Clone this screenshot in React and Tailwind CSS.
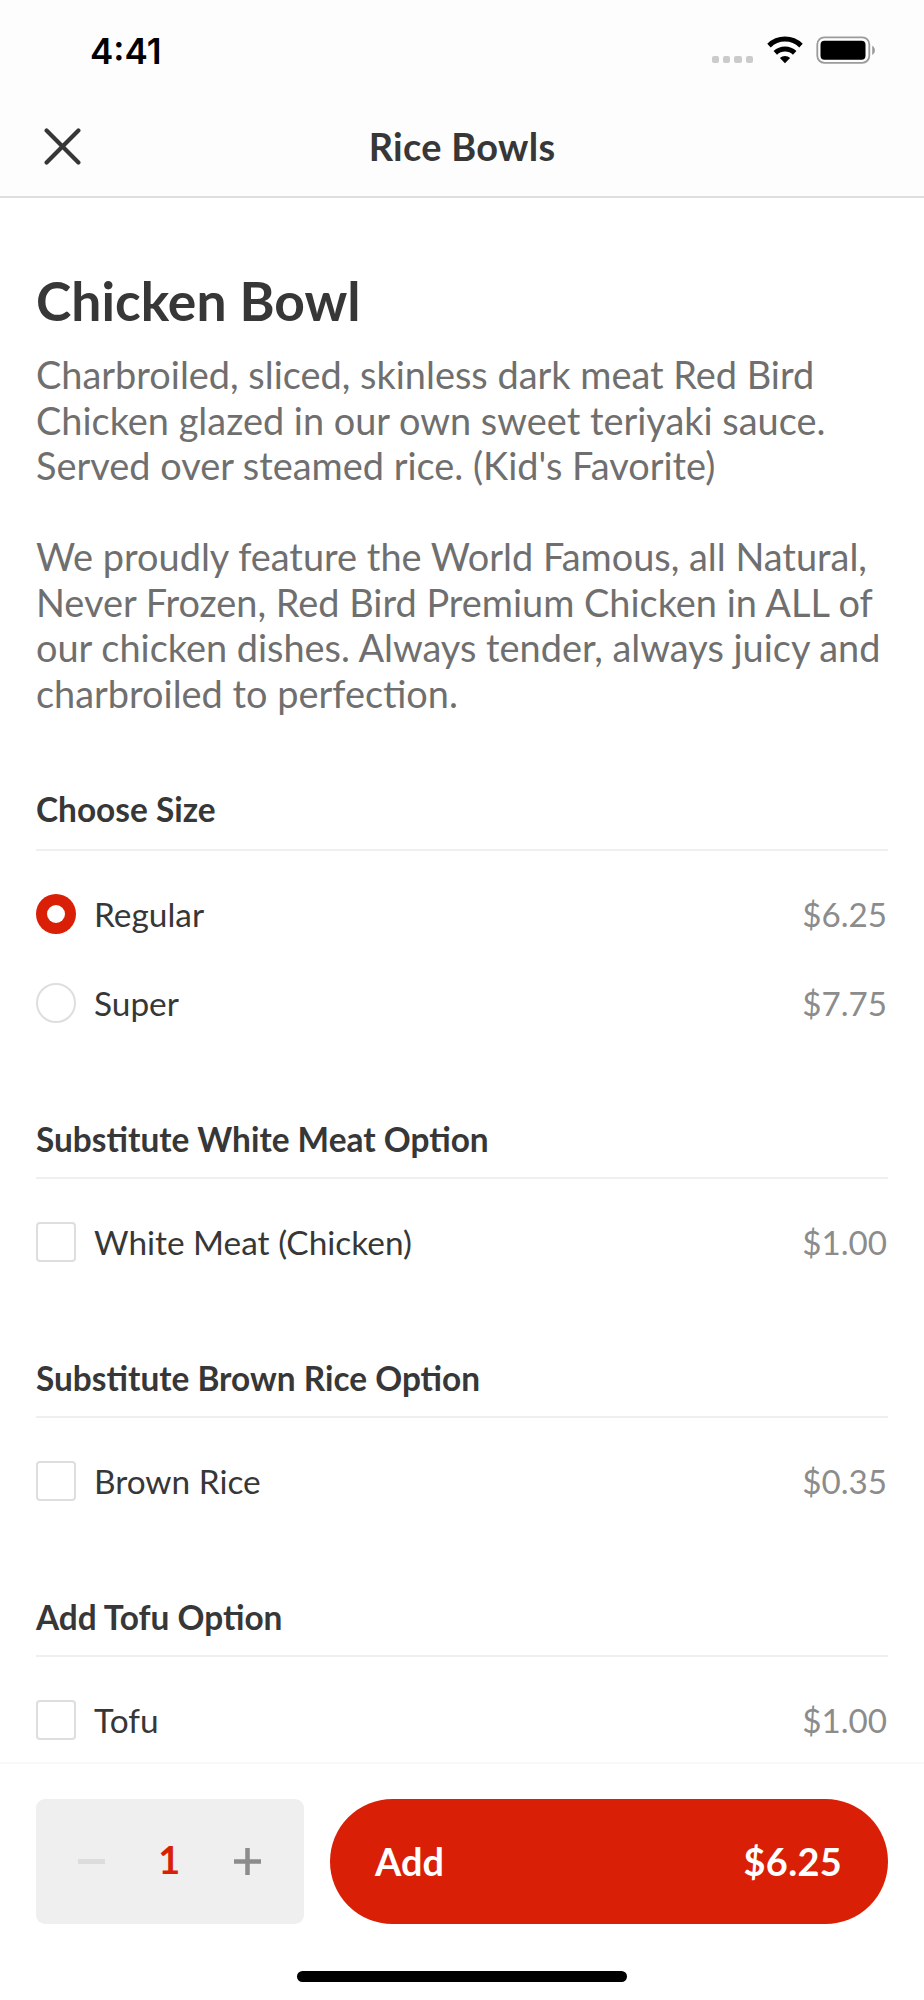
import React, { useState } from "react";

const groups = [
  {
    title: "Choose Size",
    type: "radio",
    headClass: "h-[62px]",
    bodyClass: "h-[268px]",
    items: [
      { name: "Regular", price: "$6.25" },
      { name: "Super", price: "$7.75" },
    ],
  },
  {
    title: "Substitute White Meat Option",
    type: "checkbox",
    headClass: "h-[60px]",
    bodyClass: "h-[179px]",
    items: [{ name: "White Meat (Chicken)", price: "$1.00" }],
  },
  {
    title: "Substitute Brown Rice Option",
    type: "checkbox",
    headClass: "h-[60px]",
    bodyClass: "h-[179px]",
    items: [{ name: "Brown Rice", price: "$0.35" }],
  },
  {
    title: "Add Tofu Option",
    type: "checkbox",
    headClass: "h-[60px]",
    bodyClass: "h-[105px]",
    items: [{ name: "Tofu", price: "$1.00" }],
  },
];

const StatusBar = () => (
  <div className="flex h-[98px] items-start justify-between pl-[90px] pr-[47px]">
    <span className="mt-[30px] font-['Inter'] text-[35px] font-semibold leading-[42px] text-black">
      4:41
    </span>
    <div className="mt-[36px] flex items-start">
      <div className="mt-[20px] flex gap-[4px]">
        {[0, 1, 2, 3].map((dot) => (
          <span key={dot} className="h-[7px] w-[7.3px] rounded-[2px] bg-[#cbcbcb]" />
        ))}
      </div>
      <svg className="ml-[14px]" width="36" height="28" viewBox="0 0 36 28" fill="none">
        <path d="M2 9.6 A23 23 0 0 1 34 9.6" stroke="#000" strokeWidth="5" />
        <path d="M8.3 16.9 A14 14 0 0 1 27.7 16.9" stroke="#000" strokeWidth="5" />
        <path d="M18 27.2 L12.9 22 A7.4 7.4 0 0 1 23.1 22 Z" fill="#000" />
      </svg>
      <svg className="ml-[13px]" width="61" height="28" viewBox="0 0 61 28" fill="none">
        <rect x="1.3" y="1.3" width="52" height="25.5" rx="7" stroke="#9b9b9b" strokeWidth="1.8" />
        <rect x="4.5" y="4.7" width="45" height="19" rx="4" fill="#000" />
        <path d="M56.2 9.8 C59.8 11.5 59.8 17.2 56.2 18.9 Z" fill="#9b9b9b" />
      </svg>
    </div>
  </div>
);

const OptionControl = ({ type, checked }) => {
  if (type === "radio") {
    return checked ? (
      <span className="flex h-10 w-10 items-center justify-center rounded-full bg-[#d91f06]">
        <span className="h-[18px] w-[18px] rounded-full bg-white" />
      </span>
    ) : (
      <span className="h-10 w-10 rounded-full border-2 border-[#dedede]" />
    );
  }
  return (
    <span
      className={`h-10 w-10 rounded-[4px] border-2 border-[#dedede] ${checked ? "bg-[#d91f06]" : "bg-white"}`}
    />
  );
};

const App = () => {
  const [selected, setSelected] = useState({ Regular: true });
  const [quantity, setQuantity] = useState(1);

  const handleSelect = (group, name) => {
    if (group.type === "radio") {
      setSelected((prev) => ({ ...prev, Regular: false, Super: false, [name]: true }));
    } else {
      setSelected((prev) => ({ ...prev, [name]: !prev[name] }));
    }
  };

  return (
    <div className="flex h-[2000px] w-[924px] flex-col overflow-hidden bg-white font-['Lato',sans-serif] text-[#373737]">
      <header className="h-[198px] shrink-0 border-b-2 border-[#dedede] bg-[#fdfdfd]">
        <StatusBar />
        <div className="grid h-[97px] grid-cols-[1fr_auto_1fr] items-center px-[44px]">
          <button type="button" aria-label="Close" className="w-[37px] cursor-pointer">
            <svg width="37" height="37" viewBox="0 0 37 37" fill="none">
              <path
                d="M2.6 2.6 L34.4 34.4 M34.4 2.6 L2.6 34.4"
                stroke="#373737"
                strokeWidth="4.2"
                strokeLinecap="round"
              />
            </svg>
          </button>
          <h1 className="text-[37.9px] font-bold leading-[46px] tracking-[0.3px]">Rice Bowls</h1>
        </div>
      </header>

      <main className="flex h-[1564px] shrink-0 flex-col overflow-hidden px-9 pt-[70px]">
        <h2 className="text-[53.4px] font-bold leading-[64px]">Chicken Bowl</h2>
        <div className="mt-[20px] h-[437px] shrink-0 whitespace-nowrap text-[37.9px] leading-[45.55px] text-[#6f6f6f]">
          <p>
            Charbroiled, sliced, skinless dark meat Red Bird
            <br />
            Chicken glazed in our own sweet teriyaki sauce.
            <br />
            Served over steamed rice. (Kid's Favorite)
          </p>
          <p className="mt-[45.55px]">
            We proudly feature the World Famous, all Natural,
            <br />
            Never Frozen, Red Bird Premium Chicken in ALL of
            <br />
            our chicken dishes. Always tender, always juicy and
            <br />
            charbroiled to perfection.
          </p>
        </div>

        {groups.map((group) => (
          <section key={group.title} className="shrink-0">
            <h3
              className={`border-b-2 border-[#efefef] text-[33.4px] font-bold leading-[40px] ${group.headClass}`}
            >
              {group.title}
            </h3>
            <div className={`flex flex-col gap-[49px] pt-[43px] ${group.bodyClass}`}>
              {group.items.map((item) => (
                <div
                  key={item.name}
                  onClick={() => handleSelect(group, item.name)}
                  className="flex h-10 cursor-pointer items-center text-[33.4px] leading-[40px]"
                >
                  <OptionControl type={group.type} checked={!!selected[item.name]} />
                  <span className="ml-[18px] flex-1 pb-px">{item.name}</span>
                  <span className="mr-[1px] pb-px text-[33.2px] text-[#8c8c8c]">{item.price}</span>
                </div>
              ))}
            </div>
          </section>
        ))}
      </main>

      <footer className="flex h-[238px] shrink-0 flex-col items-center border-t-2 border-[#f8f8f8] bg-white px-9 pt-[35px]">
        <div className="flex h-[125px] w-full gap-[26.5px]">
          <div className="flex w-[267.5px] items-center justify-between rounded-[9px] bg-[#efefef] px-[42px]">
            <button
              type="button"
              aria-label="Decrease"
              onClick={() => setQuantity((prev) => Math.max(1, prev - 1))}
              className="cursor-pointer"
            >
              <svg width="27" height="27" viewBox="0 0 27 27">
                <path d="M0 13.5 H27" stroke="#dcdcdc" strokeWidth="5" />
              </svg>
            </button>
            <span className="pb-[3px] pr-px text-[37.9px] font-bold leading-[46px] text-[#d91f06]">
              {quantity}
            </span>
            <button
              type="button"
              aria-label="Increase"
              onClick={() => setQuantity((prev) => prev + 1)}
              className="cursor-pointer"
            >
              <svg width="27" height="27" viewBox="0 0 27 27">
                <path d="M0 13.5 H27 M13.5 0 V27" stroke="#8c8c8c" strokeWidth="4.5" />
              </svg>
            </button>
          </div>
          <button
            type="button"
            className="flex flex-1 cursor-pointer items-center justify-between rounded-full bg-[#d91f06] pl-[45px] pr-[46px] text-[37.9px] font-bold leading-[46px] text-white"
          >
            <span>Add</span>
            <span className="tracking-[0.3px]">$6.25</span>
          </button>
        </div>
        <div className="mt-[47px] h-[11px] w-[330px] rounded-full bg-black" />
      </footer>
    </div>
  );
};

export default App;
